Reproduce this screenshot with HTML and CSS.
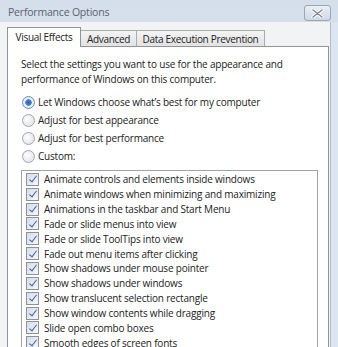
FILE: index.html
```html
<!DOCTYPE html>
<html>
<head>
  <title>Performance Options</title>
  <meta charset='utf-8'>
  <link rel="stylesheet" href="styles.css">
</head>
<body>
<div class="window">
  <div class="titlebar">
    <span class="title">Performance Options</span>
    <span class="close">
      <svg width="13" height="9" viewBox="0 0 13 9"><path d="M2 1 L11 8 M11 1 L2 8" stroke="#fff" stroke-width="3.2" stroke-linecap="round"/><path d="M2 1 L11 8 M11 1 L2 8" stroke="#7c8796" stroke-width="1.4" stroke-linecap="round"/></svg>
    </span>
  </div>
  <div class="frame">
    <div class="client">
      <div class="tabs">
        <span class="tab on">Visual Effects</span>
        <span class="tab adv">Advanced</span>
        <span class="tab dep">Data Execution Prevention</span>
      </div>
      <div class="page">
        <p class="intro">Select the settings you want to use for the appearance and<br>performance of Windows on this computer.</p>
        <div class="radios">
          <label class="radio"><span class="dot on"></span>Let Windows choose what&rsquo;s best for my computer</label>
          <label class="radio"><span class="dot"></span>Adjust for best appearance</label>
          <label class="radio"><span class="dot"></span>Adjust for best performance</label>
          <label class="radio"><span class="dot"></span>Custom:</label>
        </div>
        <div class="list">
          <div class="item"><span class="box"></span>Animate controls and elements inside windows</div>
          <div class="item"><span class="box"></span>Animate windows when minimizing and maximizing</div>
          <div class="item"><span class="box"></span>Animations in the taskbar and Start Menu</div>
          <div class="item"><span class="box"></span>Fade or slide menus into view</div>
          <div class="item"><span class="box"></span>Fade or slide ToolTips into view</div>
          <div class="item"><span class="box"></span>Fade out menu items after clicking</div>
          <div class="item"><span class="box"></span>Show shadows under mouse pointer</div>
          <div class="item"><span class="box"></span>Show shadows under windows</div>
          <div class="item"><span class="box"></span>Show translucent selection rectangle</div>
          <div class="item"><span class="box"></span>Show window contents while dragging</div>
          <div class="item"><span class="box"></span>Slide open combo boxes</div>
          <div class="item"><span class="box"></span>Smooth edges of screen fonts</div>
        </div>
      </div>
    </div>
    <div class="edge"></div>
  </div>
</div>
</body>
</html>
```

FILE: styles.css
```css
html, body {
  margin:0;
  padding:0;
  width:338px;
  height:347px;
  overflow:hidden;
}

body {
  font-family:'Open Sans', 'Noto Sans', sans-serif;
  font-size:10px;
  letter-spacing:-0.2px;
  color:#222;
}

p {
  margin:0;
}

.window {
  height:347px;
  display:flex;
  flex-direction:column;
  background:linear-gradient(#d5dfeb, #dfe7f1);
}

.titlebar {
  height:22px;
  flex:none;
  display:flex;
  justify-content:space-between;
  align-items:flex-start;
}

.title {
  padding:5px 0 0 8px;
  font-size:10.5px;
  color:#5a636e;
}

.close {
  margin:5px 7px 0 0;
  width:25px;
  height:14px;
  border:1px solid #9aa6b5;
  border-radius:3px;
  background:linear-gradient(#e9eff6, #cfd9e5);
  display:flex;
  align-items:center;
  justify-content:center;
}

.frame {
  flex:1;
  display:flex;
  min-height:0;
}

.client {
  flex:1;
  background:#f2f3f5;
  padding:4px 1px 0 7px;
  min-height:0;
}

.edge {
  width:7px;
  border-left:1px solid #b3bcc7;
  background:#dbe6f2;
}

.tabs {
  display:flex;
  align-items:flex-end;
  height:20px;
  padding-left:1px;
}

.tab {
  height:15px;
  line-height:16px;
  border:1px solid #a9abb0;
  border-bottom:none;
  margin-left:-1px;
  background:linear-gradient(#f4f4f4, #e2e2e2);
  white-space:nowrap;
  text-align:center;
  letter-spacing:-0.3px;
}

.tab.on {
  width:72px;
  height:19px;
  line-height:19px;
  background:#fff;
  border-color:#8f939a;
  position:relative;
  z-index:1;
  margin-bottom:-1px;
}

.tab.adv {
  width:55px;
}

.tab.dep {
  width:127px;
}

.page {
  background:#fff;
  border:1px solid #8f939a;
  height:400px;
  padding:10px 0 0 13px;
}

.intro {
  line-height:15px;
}

.radios {
  margin-top:6px;
}

.radio {
  display:flex;
  align-items:center;
  height:18px;
  padding-left:1px;
}

.dot {
  width:11px;
  height:11px;
  border-radius:50%;
  border:1px solid #a3a7ad;
  background:radial-gradient(circle at 40% 40%, #fff, #d9dde2);
  margin-right:3px;
}

.dot.on {
  border-color:#6f8db3;
  background:radial-gradient(circle, #2f5fa8 0, #4e86d0 3px, #e6eef8 3.5px, #dfe7f2);
}

.list {
  margin-top:5px;
  margin-right:10px;
  border:1px solid #a0a4aa;
  padding-top:1px;
}

.item {
  display:flex;
  align-items:center;
  height:14.85px;
  padding-left:4px;
  white-space:nowrap;
}

.box {
  width:11px;
  height:11px;
  border:1px solid #8e9297;
  background:linear-gradient(135deg, #d6dee9, #f4f6fa);
  margin-right:5px;
  position:relative;
}

.box::after {
  content:'';
  position:absolute;
  left:3.5px;
  top:0.5px;
  width:3px;
  height:7px;
  border:solid #4565a0;
  border-width:0 1.5px 1.5px 0;
  transform:rotate(38deg);
}
```
